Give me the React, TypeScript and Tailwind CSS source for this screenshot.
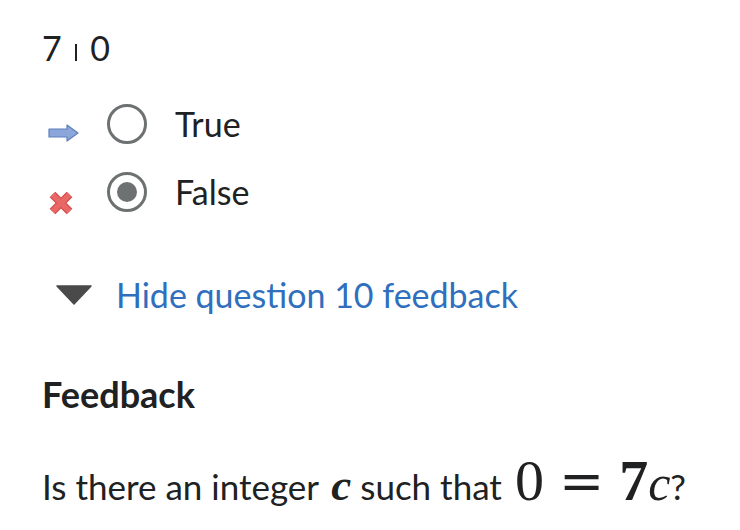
// Quiz review: answer row + feedback section

import React from "react";

function ArrowIcon() {
  return (
    <svg width="31" height="18" viewBox="0 0 31 18">
      <path
        d="M1 5h18V1l11 8-11 8v-4H1z"
        fill="#8aa6da"
        stroke="#5f7fbd"
        strokeWidth="1.2"
        strokeLinejoin="round"
      />
    </svg>
  );
}

function CrossIcon() {
  return (
    <svg width="26" height="26" viewBox="0 0 26 26">
      <path d="M4.5 4.5l17 17M21.5 4.5l-17 17" stroke="#d54848" strokeWidth="8" strokeLinecap="butt" />
      <path d="M4.5 4.5l17 17M21.5 4.5l-17 17" stroke="#e86868" strokeWidth="5.5" strokeLinecap="butt" />
    </svg>
  );
}

function Radio({ checked }: { checked?: boolean }) {
  return (
    <span className="flex h-[40px] w-[40px] shrink-0 items-center justify-center rounded-full border-[3.5px] border-[#6d7171]">
      {checked && <span className="h-[20px] w-[20px] rounded-full bg-[#6d7171]" />}
    </span>
  );
}

export default function App() {
  const answers = [
    { label: "True", icon: <ArrowIcon />, checked: false, iconShift: "mt-[18px]" },
    { label: "False", icon: <CrossIcon />, checked: true, iconShift: "mt-[22px]" },
  ];

  return (
    <div className="min-h-[530px] w-[740px] bg-white pl-[42px] pt-[27px] text-[34px] leading-[42px] text-[#202122] [font-family:Lato,'Open_Sans',sans-serif]">
      {/* question stem */}
      <div className="flex items-baseline">
        <span>7</span>
        <span className="mx-[13px] inline-block h-[17px] w-[2.5px] bg-[#202122]" />
        <span>0</span>
      </div>

      {/* answers */}
      <div className="mt-[35px] flex flex-col gap-[28px]">
        {answers.map((a) => (
          <div key={a.label} className="flex h-[40px] items-center">
            <span className={`flex w-[65px] justify-start pl-[6px] ${a.iconShift}`}>{a.icon}</span>
            <Radio checked={a.checked} />
            <span className="ml-[28px]">{a.label}</span>
          </div>
        ))}
      </div>

      {/* feedback toggle */}
      <div className="mt-[63px] flex h-[40px] items-center">
        <svg width="36" height="20" viewBox="0 0 36 20" className="ml-[14px]">
          <path d="M1 1h34L18 19z" fill="#4a4a4a" stroke="#4a4a4a" strokeWidth="1.5" strokeLinejoin="round" />
        </svg>
        <span className="ml-[24px] text-[#2f6fbe]">Hide question 10 feedback</span>
      </div>

      {/* feedback body */}
      <div className="mt-[58px] text-[36px] font-bold">Feedback</div>
      <div className="mt-[45px] flex h-[42px] items-baseline whitespace-nowrap text-[35px]">
        <span>Is there an integer&nbsp;</span>
        <span className="ml-[4px] font-bold italic text-[45px] [font-family:'Liberation_Serif',serif]">c</span>
        <span>&nbsp;such that&nbsp;</span>
        <span className="ml-[4px] text-[58px] [font-family:'Liberation_Serif',serif]">0</span>
        <span className="mx-[15px] text-[54px] [font-family:'DejaVu_Serif',serif]">=</span>
        <span className="font-bold text-[58px] [font-family:'Liberation_Serif',serif]">7</span>
        <span className="italic text-[50px] [font-family:'Liberation_Serif',serif]">c</span>
        <span>?</span>
      </div>
    </div>
  );
}
